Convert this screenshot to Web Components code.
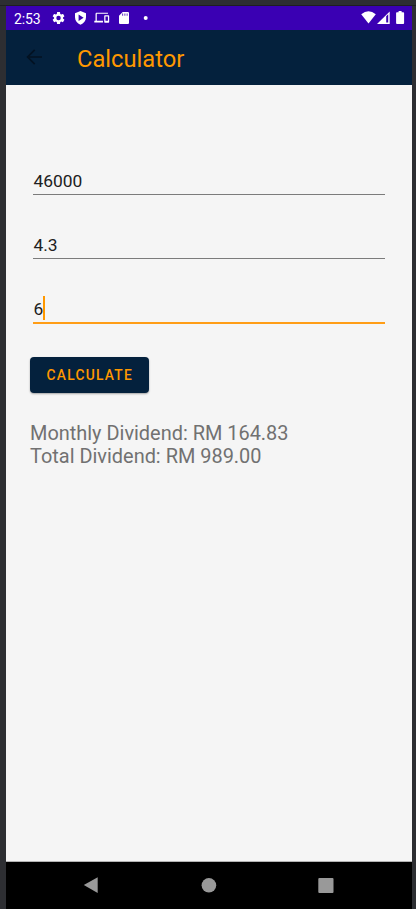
<!DOCTYPE html>
<html lang="en">
<head>
<meta charset="utf-8">
<title>Calculator</title>
<style>
html,body{margin:0;height:100%;background:#2d2e32;overflow:hidden}
body{font-family:Roboto,"Liberation Sans",sans-serif}
</style>
</head>
<body>
<phone-screen>
  <status-bar>2:53</status-bar>
  <app-bar>Calculator</app-bar>
  <calculator-form>
    <text-field>46000</text-field>
    <text-field>4.3</text-field>
    <text-field focused>6</text-field>
    <action-button>CALCULATE</action-button>
    <result-text><div>Monthly Dividend: RM 164.83</div><div>Total Dividend: RM 989.00</div></result-text>
  </calculator-form>
  <nav-bar></nav-bar>
</phone-screen>
<script>
const define = (name, html) => customElements.define(name, class extends HTMLElement {
  constructor() {
    super();
    this.attachShadow({ mode: 'open' }).innerHTML = html;
  }
});

define('phone-screen', `<style>
:host{display:flex;flex-direction:column;box-sizing:border-box;width:416px;height:909px;padding:0 4px 0 6px;background:linear-gradient(#2d2e32 5px,#1e1f22 5px,#1e1f22 6px,#2d2e32 6px)}
.screen{margin-top:6px;height:903px;display:flex;flex-direction:column;background:#f5f5f5}
</style><div class="screen"><slot></slot></div>`);

define('status-bar', `<style>
:host{display:flex;align-items:center;box-sizing:border-box;height:24px;background:#3a00b3;color:#fff;font-size:14px;line-height:24px;padding-left:8px}
.time{width:37px;padding-top:1px;letter-spacing:-.1px}
svg{display:block;fill:#fff}
</style><span class="time"><slot></slot></span>
<svg width="361" height="24" viewBox="51 6 361 24">
<path transform="translate(51.1 10.6) scale(.62)" d="M19.14 12.94c.04-.3.06-.61.06-.94 0-.32-.02-.64-.07-.94l2.03-1.58a.49.49 0 0 0 .12-.61l-1.92-3.32a.49.49 0 0 0-.59-.22l-2.39.96a7 7 0 0 0-1.62-.94l-.36-2.54a.48.48 0 0 0-.48-.41h-3.84a.47.47 0 0 0-.47.41l-.36 2.54c-.59.24-1.13.57-1.62.94l-2.39-.96a.47.47 0 0 0-.59.22L2.74 8.87a.47.47 0 0 0 .12.61l2.03 1.58c-.05.3-.09.63-.09.94s.02.64.07.94l-2.03 1.58a.49.49 0 0 0-.12.61l1.92 3.32c.12.22.37.29.59.22l2.39-.96c.5.38 1.03.7 1.62.94l.36 2.54c.05.24.24.41.48.41h3.84c.24 0 .44-.17.47-.41l.36-2.54a7 7 0 0 0 1.62-.94l2.39.96c.22.08.47 0 .59-.22l1.92-3.32a.47.47 0 0 0-.12-.61zM12 15.6a3.6 3.6 0 1 1 0-7.2 3.6 3.6 0 0 1 0 7.2z"/>
<path fill-rule="evenodd" d="M80.5 11l5.5 2.2v4c0 3.600-2.200 6.200-5.500 7.500-3.300-1.300-5.500-3.900-5.500-7.500v-4zM78.600 14.500v6.400l5-3.200z"/>
<path transform="translate(94.300 10.300) scale(.62)" d="M4 5.700h18V4H4c-1.100 0-2 .9-2 2v11H0v2.600h14v-2.600H4V5.700zm19 2.300h-6c-.55 0-1 .45-1 1v10c0 .55.45 1 1 1h6c.55 0 1-.45 1-1V9c0-.55-.45-1-1-1zm-1 9h-4v-7h4v7z"/>
<path fill-rule="evenodd" d="M122.700 12h5.200q1.100 0 1.100 1.100v9.800q0 1.100-1.100 1.100h-7.800q-1.100 0-1.100-1.100v-7.200zM122.300 13.600v2.200h.8v-2.200zM124.500 13.600v2.200h.8v-2.200zM126.700 13.600v2.200h.8v-2.200z"/>
<circle cx="145.700" cy="18" r="2"/>
<path d="M361.200 14.200q7.300-6 14.600 0L368.500 23.500z"/>
<path fill-rule="evenodd" d="M389.700 11.500V24H377zM386.200 16.300v6.300h2v-8.300z"/>
<path d="M398.600 11h3v1.200h1.600q.9 0 .9.900v10q0 .9-.9.900h-6.200q-.9 0-.9-.9v-10q0-.9.900-.9h1.600z"/>
</svg>`);

define('app-bar', `<style>
:host{display:flex;align-items:center;box-sizing:border-box;height:55px;background:#04213d;color:#ff9800;font-size:23.700px;line-height:28px;padding:3px 0 0 20px}
svg{display:block;width:16px;height:16px;margin-bottom:4px}
span{margin-left:35px}
</style><svg viewBox="0 0 16 16" fill="none" stroke="#031222" stroke-width="1.700"><path d="M8.700.8L1.600 8l7.100 7.200M1.600 8H16"/></svg><span><slot></slot></span>`);

define('calculator-form', `<style>
:host{display:flex;flex-direction:column;align-items:flex-start;box-sizing:border-box;height:776px;padding:78px 24px 0}
</style><slot></slot>`);

define('text-field', `<style>
:host{display:flex;align-items:flex-end;align-self:stretch;box-sizing:border-box;height:32px;margin:0 3.500px 32px 3px;padding:0 0 1px .5px;font-size:17.400px;line-height:24px;color:#202020;border-bottom:1px solid #7b7b7b}
:host([focused]){height:33px;margin-bottom:33px;padding-bottom:2px;border-bottom:2px solid #ff9d16}
i{display:none;width:2px;height:24px;background:#ff9800}
:host([focused]) i{display:block}
:host([focused]) span{margin-bottom:-1px}
</style><span><slot></slot></span><i></i>`);

define('action-button', `<style>
:host{display:flex;align-items:center;justify-content:center;box-sizing:border-box;width:118.500px;height:36px;border-radius:4px;background:#04213d;color:#ff9800;font-size:13.800px;font-weight:500;letter-spacing:1.230px;line-height:16px;padding:0 0 0 1px;box-shadow:0 1px 2px #0005}
</style><slot></slot>`);

define('result-text', `<style>
:host{display:block;margin-top:29px;color:#717171;font-size:19.930px;line-height:23.300px}
</style><slot></slot>`);

define('nav-bar', `<style>
:host{display:block;box-sizing:border-box;height:48px;border-top:1px solid #b3b3b3;background:#000}
svg{display:block}
</style><svg width="406" height="47" viewBox="6 862 406 47" fill="#999"><path d="M97.700 877.200v15.800L83.800 885.100z"/><circle cx="208.900" cy="885.300" r="7.300"/><rect x="318.300" y="878" width="15.200" height="15" rx="1"/></svg>`);
</script>
</body>
</html>
